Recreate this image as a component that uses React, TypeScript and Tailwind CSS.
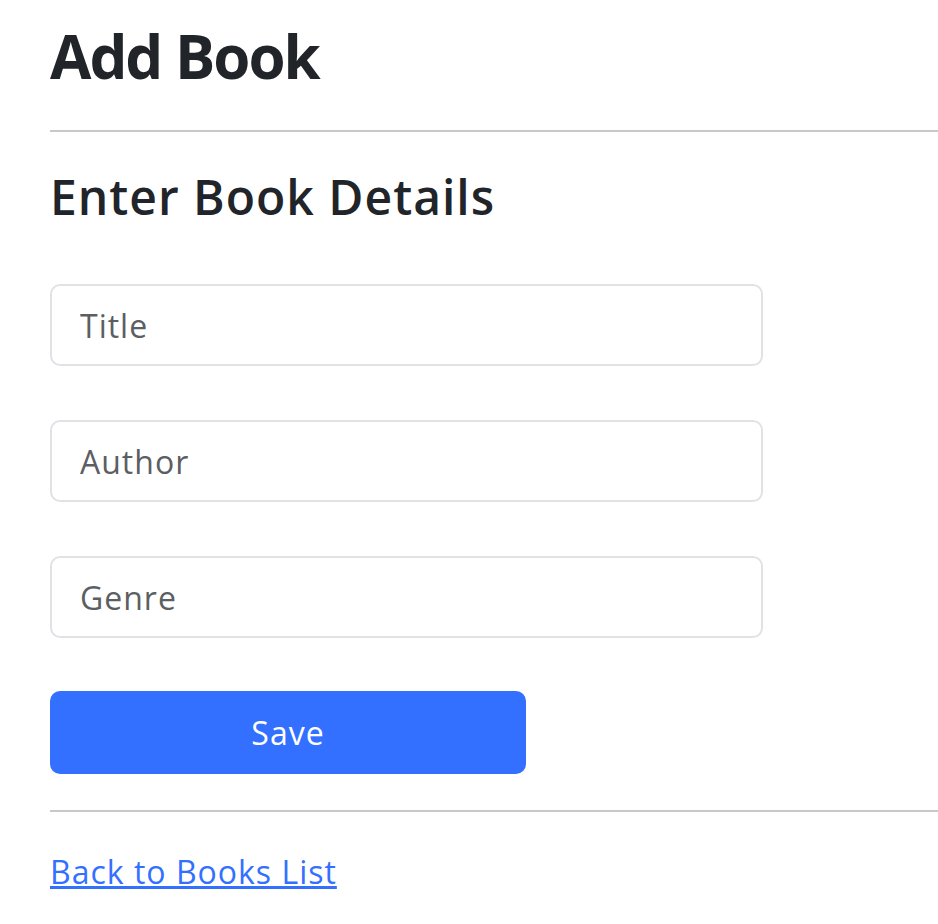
import React from "react";

export default function App() {
  const font = { fontFamily: '"Open Sans", "Noto Sans", sans-serif' };
  return (
    <div className="min-h-screen bg-white text-[#212529]" style={font}>
      <div className="pl-[50px] pt-[20px]">
        <h1 className="text-[60px] font-bold leading-[72px] tracking-[-2px]">Add Book</h1>
      </div>
      <hr className="mt-[38px] ml-[50px] border-0 h-[2px] bg-[#c8c8c8]" />
      <div className="pl-[50px] pt-[37px]">
        <h2 className="text-[48px] font-semibold leading-[56px] tracking-[1px]">Enter Book Details</h2>
        <form className="mt-[59px] flex flex-col">
          {["Title", "Author", "Genre"].map((p) => (
            <input
              key={p}
              placeholder={p}
              className="w-[713px] h-[82px] mb-[54px] rounded-[10px] border-2 border-[#e0e2e6] px-[28px] text-[32px] tracking-[1px] text-[#212529] placeholder:text-[#5b5e62] outline-none"
              style={font}
            />
          ))}
          <button
            type="button"
            className="-mt-[1px] w-[476px] h-[83px] rounded-[10px] bg-[#3370ff] text-white text-[32px] tracking-[1px]"
            style={font}
          >
            Save
          </button>
        </form>
      </div>
      <hr className="mt-[36px] ml-[50px] border-0 h-[2px] bg-[#c8c8c8]" />
      <div className="pl-[50px] pt-[40px]">
        <a href="#" className="text-[32px] text-[#3370ff] underline leading-[40px] tracking-[1px]">Back to Books List</a>
      </div>
    </div>
  );
}
